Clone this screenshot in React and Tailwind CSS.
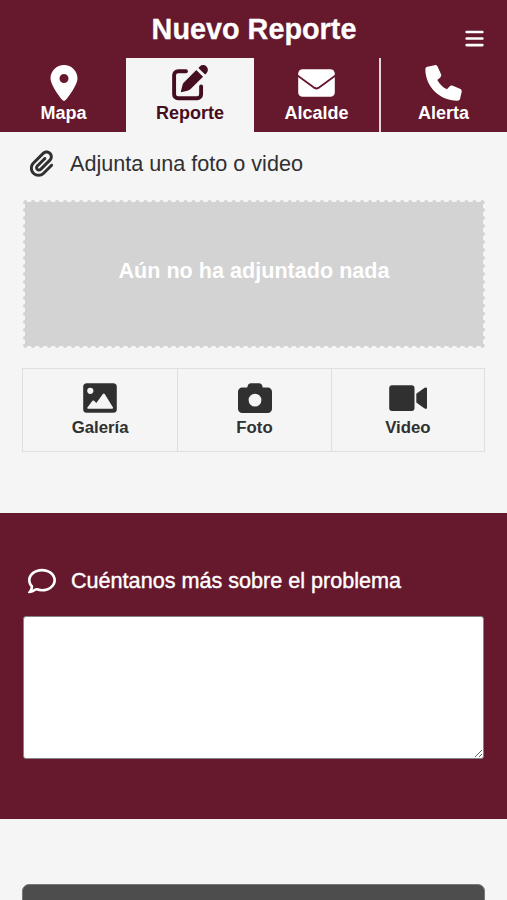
import React from "react";
import { FaBars, FaCamera, FaLocationDot, FaPaperclip, FaRegComment } from "react-icons/fa6";

function PenIcon({ className }) {
  return (
    <svg viewBox="0 0 36 36" className={className} fill="currentColor">
      <path
        d="M14 6.2H6.1a4 4 0 0 0-4 4v19a4 4 0 0 0 4 4h19a4 4 0 0 0 4-4V21.5"
        fill="none"
        stroke="currentColor"
        strokeWidth="3.9"
        strokeLinecap="round"
      />
      <path d="M24.3 5 31 11.7 18.6 24.1Q17.6 25 16.2 25.5L10.2 27.1Q8.7 27.4 9 25.9L10.6 19.8Q11 18.4 11.9 17.4Z" />
      <path d="M26.4 2.9 27.8 1.5a4.6 4.6 0 0 1 6.7 6.7L33.1 9.6Z" />
    </svg>
  );
}

function EnvelopeIcon({ className }) {
  return (
    <svg viewBox="0 0 37 36" className={className}>
      <rect x="0.2" y="4.2" width="36.6" height="27.6" rx="4.4" fill="currentColor" />
      <path d="M-1 10.2 16.6 22.9Q18.5 24.2 20.4 22.9L38 10.2" fill="none" stroke="#66182d" strokeWidth="1.9" />
    </svg>
  );
}

function PhoneIcon({ className }) {
  return (
    <svg viewBox="0 0 37 36.5" className={className} fill="currentColor">
      <path d="M2.2 1.8 9.6.2C11-.1 12 .5 12.6 1.7L16 9.4C16.5 10.6 16.2 11.7 15.2 12.6L12.2 15.1C14.6 19.6 17.8 22.6 22 24.6L24.6 21.8C25.5 20.8 26.7 20.5 27.9 21L35.2 24.2C36.6 24.9 37.2 25.9 36.9 27.3L35.3 34.3C35 35.6 34 36.3 32.6 36.3 14.6 36.3.1 21.9.1 4.4.1 3 .8 2.1 2.2 1.8Z" />
    </svg>
  );
}

function GalleryIcon({ className }) {
  return (
    <svg viewBox="0 0 34 34" className={className}>
      <rect x="0.2" y="2.2" width="33.6" height="29.6" rx="3.6" fill="currentColor" />
      <circle cx="7.3" cy="9.8" r="3.1" fill="#f5f5f5" />
      <path
        d="M4.9 27.8Q3.8 27.6 4.4 26.6L9.5 19.8Q10.3 19 11.1 19.8L13.3 21.9 19.9 13Q20.8 12.2 21.7 13L30 26.5Q30.4 27.6 29.3 27.8Z"
        fill="#f5f5f5"
      />
    </svg>
  );
}

function VideoIcon({ className }) {
  return (
    <svg viewBox="0 0 38.5 34" className={className} fill="currentColor">
      <rect x="0.2" y="4.3" width="25.3" height="25.6" rx="2.9" />
      <path d="M27.3 12.8 35.6 6.8Q38.3 5.8 38.3 8.4V25.8Q38.3 28.4 35.6 27.4L27.3 21.4Z" />
    </svg>
  );
}

const tabs = [
  { label: "Mapa", Icon: FaLocationDot, size: "size-[36px]", style: "w-[126px] pl-px text-white" },
  { label: "Reporte", Icon: PenIcon, size: "size-[36px]", style: "w-[128px] bg-[#f5f5f5] text-[#450d20]" },
  { label: "Alcalde", Icon: EnvelopeIcon, size: "w-[37px] h-[36px]", style: "w-[127px] border-r-2 border-[#e3d5da] text-white" },
  { label: "Alerta", Icon: PhoneIcon, size: "w-[37px] h-[36px]", style: "w-[126px] pr-px text-white" },
];

const sources = [
  { label: "Galería", Icon: GalleryIcon, size: "w-[34px] h-[34px]", box: "w-[155px]" },
  { label: "Foto", Icon: FaCamera, size: "w-[34px] h-[34px]", box: "w-[154px] border-l border-[#dfdfdf]" },
  { label: "Video", Icon: VideoIcon, size: "w-[38.5px] h-[34px]", box: "w-[154px] border-l border-[#dfdfdf]" },
];

function Header() {
  return (
    <header className="bg-[#66182d]">
      <div className="flex h-[58px] items-start pt-[13px]">
        <div className="w-[44px]" />
        <h1 className="flex-1 text-center text-[28.8px] leading-[33px] font-bold text-white [-webkit-text-stroke:0.3px_white]">
          Nuevo Reporte
        </h1>
        <button type="button" aria-label="Menú" className="mt-[15px] mr-[22px] flex w-[21px] justify-center text-white">
          <FaBars className="size-[21px]" />
        </button>
      </div>
      <nav className="flex h-[74px]">
        {tabs.map(({ label, Icon, size, style }) => (
          <a key={label} className={"flex flex-col items-center pt-[7px] " + style}>
            <Icon className={size} />
            <span className="mt-[2px] text-[18px] leading-[21px] font-bold">{label}</span>
          </a>
        ))}
      </nav>
    </header>
  );
}

export default function App() {
  return (
    <main className="h-[900px] w-[507px] overflow-hidden bg-[#f5f5f5] font-['Liberation_Sans',Arial,sans-serif] text-[#303030]">
      <Header />

      <section className="h-[381px] pt-[18px] pr-[22px] pl-[23px]">
        <div className="flex h-[27px] items-center gap-[15px] pl-[5px]">
          <FaPaperclip className="size-[27px]" />
          <h2 className="text-[21.6px] leading-[27px]">Adjunta una foto o video</h2>
        </div>
        <div className="mt-[23px] flex h-[148px] rounded-[4px] border-4 border-dotted border-[#d3d3d3]">
          <div className="-m-[2px] flex flex-1 items-center justify-center bg-[#d3d3d3] pb-[5px] text-[21.6px] font-bold text-white">
            Aún no ha adjuntado nada
          </div>
        </div>
        <div className="mt-[20px] -ml-px flex h-[84px] w-[463px] border border-[#dfdfdf]">
          {sources.map(({ label, Icon, size, box }) => (
            <button key={label} type="button" className={"flex flex-col items-center pt-[12px] " + box}>
              <Icon className={size} />
              <span className="mt-[3px] text-[16.8px] leading-[20px] font-bold">{label}</span>
            </button>
          ))}
        </div>
      </section>

      <section className="h-[306px] bg-[#66182d] pt-[54px] pr-[23px] pl-[23px] text-white">
        <div className="flex h-[27px] items-center gap-[15px] pl-[5px]">
          <FaRegComment className="size-[28px]" />
          <h2 className="text-[21.6px] leading-[27px] [-webkit-text-stroke:0.4px_white]">Cuéntanos más sobre el problema</h2>
        </div>
        <textarea className="mt-[22px] block h-[143px] w-[461px] resize rounded-[3px] border border-[#858585] bg-white" />
      </section>

      <div className="px-[22px] pt-[65px]">
        <button type="button" className="block h-[56px] w-[463px] rounded-[7px] border border-[#777777] bg-[#4d4d4d]" />
      </div>
    </main>
  );
}
